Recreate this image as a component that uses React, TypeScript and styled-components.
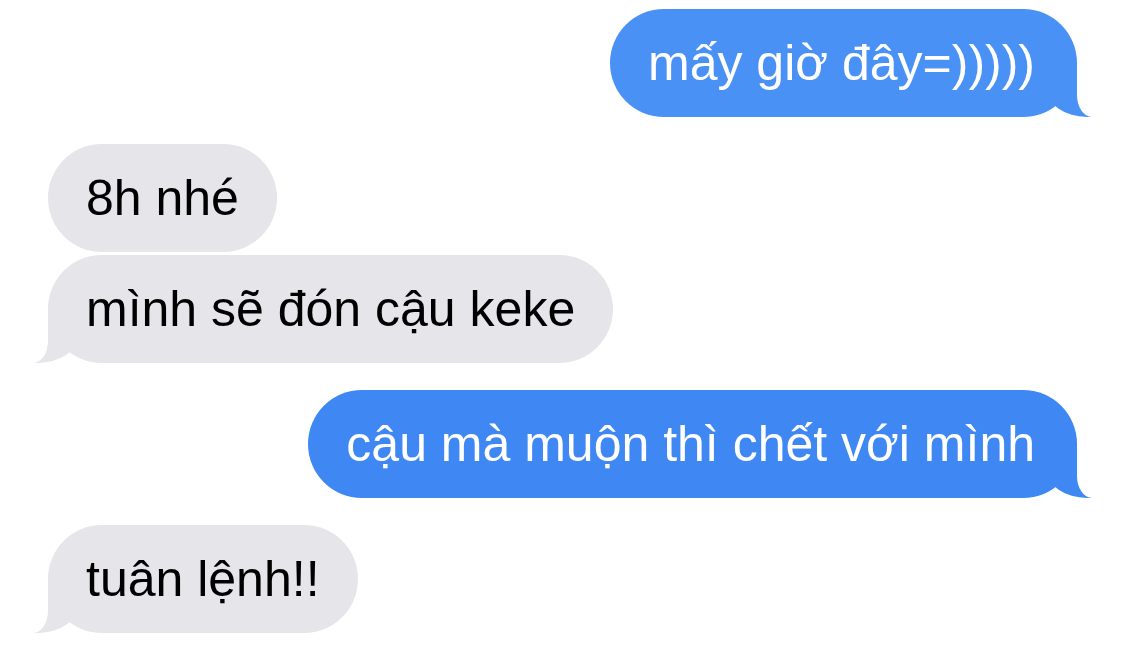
import React from "react";
import styled, { createGlobalStyle, css } from "styled-components";

const GlobalStyle = createGlobalStyle`
  html, body {
    margin: 0;
    padding: 0;
    background: #ffffff;
  }
  body {
    font-family: "Liberation Sans", Arial, sans-serif;
    -webkit-font-smoothing: antialiased;
  }
`;

const Thread = styled.main`
  display: flex;
  flex-direction: column;
  width: 1125px;
  min-height: 653px;
  padding: 9px 48px 0 48px;
  box-sizing: border-box;
  overflow: hidden;
`;

type BubbleProps = {
  $fromMe: boolean;
  $tail: boolean;
  $groupStart: boolean;
  $bg: string;
};

const Bubble = styled.div<BubbleProps>`
  position: relative;
  align-self: ${(p) => (p.$fromMe ? "flex-end" : "flex-start")};
  margin-top: ${(p) => (p.$groupStart ? "27px" : "3px")};
  padding: 24px ${(p) => (p.$fromMe ? "42px" : "38px")} 24px 38px;
  border-radius: 54px;
  background: ${(p) => p.$bg};
  color: ${(p) => (p.$fromMe ? "#ffffff" : "#000000")};
  font-size: 50px;
  line-height: 60px;
  white-space: nowrap;

  &:first-child {
    margin-top: 0;
  }

  ${(p) =>
    p.$tail &&
    css`
      &::before,
      &::after {
        content: "";
        position: absolute;
        bottom: 0;
        height: 54px;
      }
      &::before {
        width: 45px;
        background: ${p.$bg};
        ${p.$fromMe
          ? css`
              right: -15px;
              border-bottom-left-radius: 40px 28px;
            `
          : css`
              left: -15px;
              border-bottom-right-radius: 40px 28px;
            `}
      }
      &::after {
        width: 30px;
        background: #ffffff;
        ${p.$fromMe
          ? css`
              right: -30px;
              border-bottom-left-radius: 15px 22px;
            `
          : css`
              left: -30px;
              border-bottom-right-radius: 15px 22px;
            `}
      }
    `}
`;

type Msg = {
  text: string;
  fromMe: boolean;
  tail: boolean;
  groupStart: boolean;
  bg: string;
};

const messages: Msg[] = [
  { text: "mấy giờ đây=)))))", fromMe: true, tail: true, groupStart: true, bg: "#4a91f5" },
  { text: "8h nhé", fromMe: false, tail: false, groupStart: true, bg: "#e5e5ea" },
  { text: "mình sẽ đón cậu keke", fromMe: false, tail: true, groupStart: false, bg: "#e5e5ea" },
  { text: "cậu mà muộn thì chết với mình", fromMe: true, tail: true, groupStart: true, bg: "#3f87f2" },
  { text: "tuân lệnh!!", fromMe: false, tail: true, groupStart: true, bg: "#e5e5ea" },
];

export default function App() {
  return (
    <>
      <GlobalStyle />
      <Thread>
        {messages.map((m, i) => (
          <Bubble
            key={i}
            $fromMe={m.fromMe}
            $tail={m.tail}
            $groupStart={m.groupStart}
            $bg={m.bg}
          >
            {m.text}
          </Bubble>
        ))}
      </Thread>
    </>
  );
}
